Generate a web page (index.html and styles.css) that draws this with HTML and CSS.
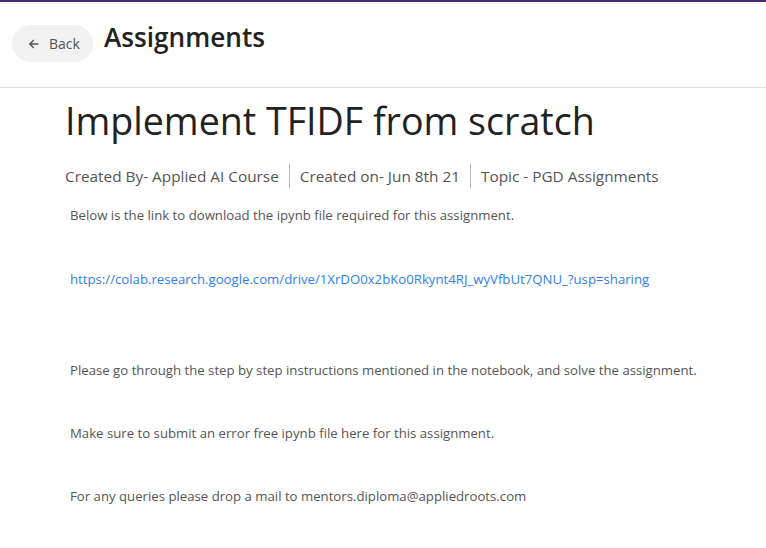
FILE: index.html
```html
<!DOCTYPE html>
<html>
<head>
<meta charset="utf-8">
<link rel="stylesheet" href="styles.css">
</head>
<body>
<header class="topbar">
  <button class="back">
    <svg class="back-icon" width="12" height="12" viewBox="0 0 12 12"><path d="M10.5 6H1.8M5.8 2L1.8 6l4 4" fill="none" stroke="#555" stroke-width="1.4"/></svg>
    <span>Back</span>
  </button>
  <h1 class="page-title">Assignments</h1>
</header>
<main class="content">
  <h2 class="title">Implement TFIDF from scratch</h2>
  <div class="meta">
    <span class="meta-item">Created By- Applied AI Course</span>
    <span class="meta-item">Created on- Jun 8th 21</span>
    <span class="meta-item">Topic - PGD Assignments</span>
  </div>
  <div class="body">
    <p class="p1">Below is the link to download the ipynb file required for this assignment.</p>
    <p class="p2"><a href="#">https://colab.research.google.com/drive/1XrDO0x2bKo0Rkynt4RJ_wyVfbUt7QNU_?usp=sharing</a></p>
    <p class="p3">Please go through the step by step instructions mentioned in the notebook, and solve the assignment.</p>
    <p class="p4">Make sure to submit an error free ipynb file here for this assignment.</p>
    <p class="p4">For any queries please drop a mail to mentors.diploma@appliedroots.com</p>
  </div>
</main>
</body>
</html>
```

FILE: styles.css
```css
html, body { margin: 0; padding: 0; background: #fff; }
body { font-family: "Open Sans", "Noto Sans", sans-serif; color: #555; }
.topbar {
  border-top: 2px solid #4b2c7c;
  border-bottom: 1px solid #e0e0e0;
  height: 85px;
  display: flex;
  align-items: flex-start;
  padding-left: 12px;
}
.back {
  margin-top: 23px;
  width: 81px;
  height: 37px;
  border: none;
  border-radius: 19px;
  background: #f2f2f2;
  display: flex;
  align-items: center;
  gap: 9px;
  padding: 0 0 0 16px;
  font-family: inherit;
  font-size: 14px;
  color: #555;
}
.back-icon { display: block; }
.page-title {
  margin: 15px 0 0 11px;
  font-size: 26.2px;
  font-weight: 600;
  color: #222;
  line-height: 40px;
}
.content { padding-left: 65px; }
.title {
  margin: 7px 0 0 0;
  font-size: 37.6px;
  font-weight: 400;
  color: #222;
  line-height: 52px;
}
.meta {
  display: flex;
  margin-top: 17px;
  font-size: 15.35px;
  line-height: 24px;
  color: #555;
}
.meta-item { padding: 0 10px; border-left: 1px solid #bbb; }
.meta-item:first-child { padding-left: 0; border-left: none; }
.body { padding-left: 5px; font-size: 13.2px; line-height: 18px; }
.body p { margin: 0; }
.p1 { margin-top: 18px !important; }
.p2 { margin-top: 46px !important; }
.p3 { margin-top: 73px !important; }
.p4 { margin-top: 45px !important; }
a { color: #2f80ed; text-decoration: none; }
```
